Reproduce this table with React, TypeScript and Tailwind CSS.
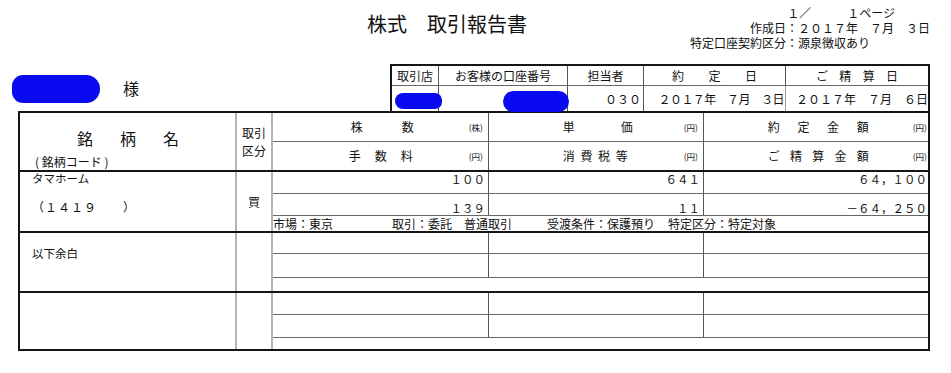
import React from 'react'

const LINE = 'border-[#666]'

function Spread({ text, className }: { text: string; className: string }) {
  return (
    <span className={`flex justify-between ${className}`}>
      {Array.from(text).map((ch, i) => (
        <span key={i}>{ch}</span>
      ))}
    </span>
  )
}

function HeadCell({
  label,
  labelClass,
  unit,
  className
}: {
  label: string
  labelClass: string
  unit: string
  className: string
}) {
  return (
    <div className={`flex items-center justify-end ${className}`}>
      <Spread text={label} className={labelClass} />
      <span className="text-[8.5px] leading-[10px]">{unit}</span>
    </div>
  )
}

function Cells({
  h,
  a,
  b,
  c,
  align = 'items-center'
}: {
  h: string
  a?: string
  b?: string
  c?: string
  align?: string
}) {
  return (
    <div className={`flex ${h} border-b ${LINE} text-[11.5px] leading-[14px]`}>
      <div className={`w-[216px] border-r border-[#555] flex justify-end pr-[3px] ${align}`}>{a}</div>
      <div className={`w-[215px] border-r border-[#555] flex justify-end pr-[3px] ${align}`}>{b}</div>
      <div className={`flex-1 flex justify-end pr-[1px] ${align}`}>{c}</div>
    </div>
  )
}

function EmptyBlock({ h, r1, r2, note }: { h: string; r1: string; r2: string; note?: string }) {
  return (
    <div className={`flex ${h} border-t-2 border-[#151515]`}>
      <div className="w-[217px] border-r-2 border-[#b4b4b4] pl-[12px] pt-[12px] text-[11.5px] leading-[16px]">
        {note}
      </div>
      <div className="w-[36px] border-r-2 border-[#b4b4b4]" />
      <div className="flex-1 flex flex-col">
        <Cells h={r1} />
        <Cells h={r2} />
        <div className="flex-1" />
      </div>
    </div>
  )
}

export default function App() {
  return (
    <div className="w-[951px] h-[373px] bg-white text-[#111] overflow-hidden font-['Noto_Sans_CJK_JP','Noto_Sans_CJK_SC',sans-serif]">
      {/* title and issue info */}
      <div className="flex h-[64px]">
        <div className="ml-[367px] mt-[12px] h-[24px] text-[20px] leading-[24px] whitespace-pre">株式　取引報告書</div>
        <div className="ml-auto mr-[21px] mt-[5px] flex flex-col items-end text-[12px] leading-[15px] whitespace-pre">
          <span className="h-[15px] mr-[35px]">１／　　　１ページ</span>
          <span className="h-[15px]">作成日：２０１７年　７月　３日</span>
          <span className="h-[15px] mr-[60px]">特定口座契約区分：源泉徴収あり</span>
        </div>
      </div>

      {/* customer and account header */}
      <div className="flex h-[47px]">
        <div className="w-[390px] flex items-start">
          <div className="ml-[12px] mt-[11px] w-[88px] h-[28px] bg-[#0a0af0] rounded-l-[11px] rounded-r-[14px]" />
          <div className="ml-[23px] mt-[14px] text-[16px] leading-[20px]">様</div>
        </div>
        <div className="relative w-[540px] border-t-2 border-x-2 border-[#151515] flex flex-col text-[12px]">
          <div className={`flex h-[20px] border-b ${LINE} leading-[14px]`}>
            <div className="w-[47px] border-r border-[#555] flex items-center justify-center">取引店</div>
            <div className="w-[129px] border-r border-[#555] flex items-center justify-center">お客様の口座番号</div>
            <div className="w-[76px] border-r border-[#555] flex items-center justify-center">担当者</div>
            <div className="w-[142px] border-r border-[#555] flex items-center justify-center">
              <Spread text="約定日" className="w-[85px]" />
            </div>
            <div className="flex-1 flex items-center justify-center">
              <Spread text="ご精算日" className="w-[82px]" />
            </div>
          </div>
          <div className="flex flex-1 leading-[14px] whitespace-pre">
            <div className="w-[47px] border-r border-[#555]" />
            <div className="w-[129px] border-r border-[#555]" />
            <div className="w-[76px] border-r border-[#555] flex items-center justify-end pr-[2px]">０３０</div>
            <div className="w-[142px] border-r border-[#999] flex items-center justify-end pr-[1px] tracking-[-0.6px]">
              ２０１７年　７月　３日
            </div>
            <div className="flex-1 flex items-center justify-end">２０１７年　７月　６日</div>
          </div>
          {/* redaction marks */}
          <div className="absolute left-[3px] top-[27px] w-[47px] h-[16px] bg-[#0a0af0] rounded-l-[9px] rounded-r-[8px]" />
          <div className="absolute left-[111px] top-[25px] w-[66px] h-[21px] bg-[#0a0af0] rounded-full" />
        </div>
      </div>

      {/* main table */}
      <div className="ml-[18px] w-[912px] h-[240px] border-2 border-[#151515] flex flex-col">
        <div className="flex h-[57px]">
          <div className="w-[217px] border-r-2 border-[#b4b4b4] flex flex-col">
            <div className="pl-[57px] pt-[16px] text-[16px] leading-[18px]">
              <Spread text="銘柄名" className="w-[102px]" />
            </div>
            <div className="pl-[15px] mt-[8px] text-[12px] leading-[14px] whitespace-pre">( 銘柄コード )</div>
          </div>
          <div className="w-[36px] border-r-2 border-[#b4b4b4] flex flex-col items-center justify-center text-[12px] leading-[18px]">
            <span>取引</span>
            <span>区分</span>
          </div>
          <div className="flex-1 flex flex-col text-[12px] leading-[14px]">
            <div className={`flex h-[29px] border-b ${LINE}`}>
              <HeadCell label="株数" labelClass="w-[63px] mr-[55px]" unit="(株)" className="w-[216px] border-r border-[#555] pr-[5px]" />
              <HeadCell label="単価" labelClass="w-[70px] mr-[51px]" unit="(円)" className="w-[215px] border-r border-[#555] pr-[5px]" />
              <HeadCell label="約定金額" labelClass="w-[101px] mr-[44px]" unit="(円)" className="flex-1 pr-[1px]" />
            </div>
            <div className="flex flex-1">
              <HeadCell label="手数料" labelClass="w-[64px] mr-[56px]" unit="(円)" className="w-[216px] border-r border-[#555] pr-[5px]" />
              <HeadCell label="消費税等" labelClass="w-[65px] mr-[56px]" unit="(円)" className="w-[215px] border-r border-[#555] pr-[5px]" />
              <HeadCell label="ご精算金額" labelClass="w-[101px] mr-[44px]" unit="(円)" className="flex-1 pr-[1px]" />
            </div>
          </div>
        </div>

        {/* trade row */}
        <div className="flex h-[61px] border-t-2 border-[#151515]">
          <div className="w-[217px] border-r-2 border-[#b4b4b4] flex flex-col pl-[12px]">
            <div className="text-[11.5px] leading-[13px]">タマホーム</div>
            <div className="mt-[15px] text-[12px] leading-[14px] tracking-[1px] whitespace-pre">（１４１９　　）</div>
          </div>
          <div className="w-[36px] border-r-2 border-[#b4b4b4] flex items-center justify-center text-[12px]">買</div>
          <div className="flex-1 flex flex-col">
            <Cells h="h-[22px]" a="１００" b="６４１" c="６４，１００" align="items-start" />
            <Cells h="h-[22px]" a="１３９" b="１１" c="－６４，２５０" align="items-end" />
            <div className="flex-1 flex items-center text-[12px] leading-[14px] whitespace-pre">
              <span className="w-[119px]">市場：東京</span>
              <span className="w-[155px]">取引：委託　普通取引</span>
              <span className="w-[121px]">受渡条件：保護預り</span>
              <span>特定区分：特定対象</span>
            </div>
          </div>
        </div>

        <EmptyBlock h="h-[60px]" r1="h-[21px]" r2="h-[24px]" note="以下余白" />
        <EmptyBlock h="h-[58px]" r1="h-[22px]" r2="h-[23px]" />
      </div>
    </div>
  )
}
